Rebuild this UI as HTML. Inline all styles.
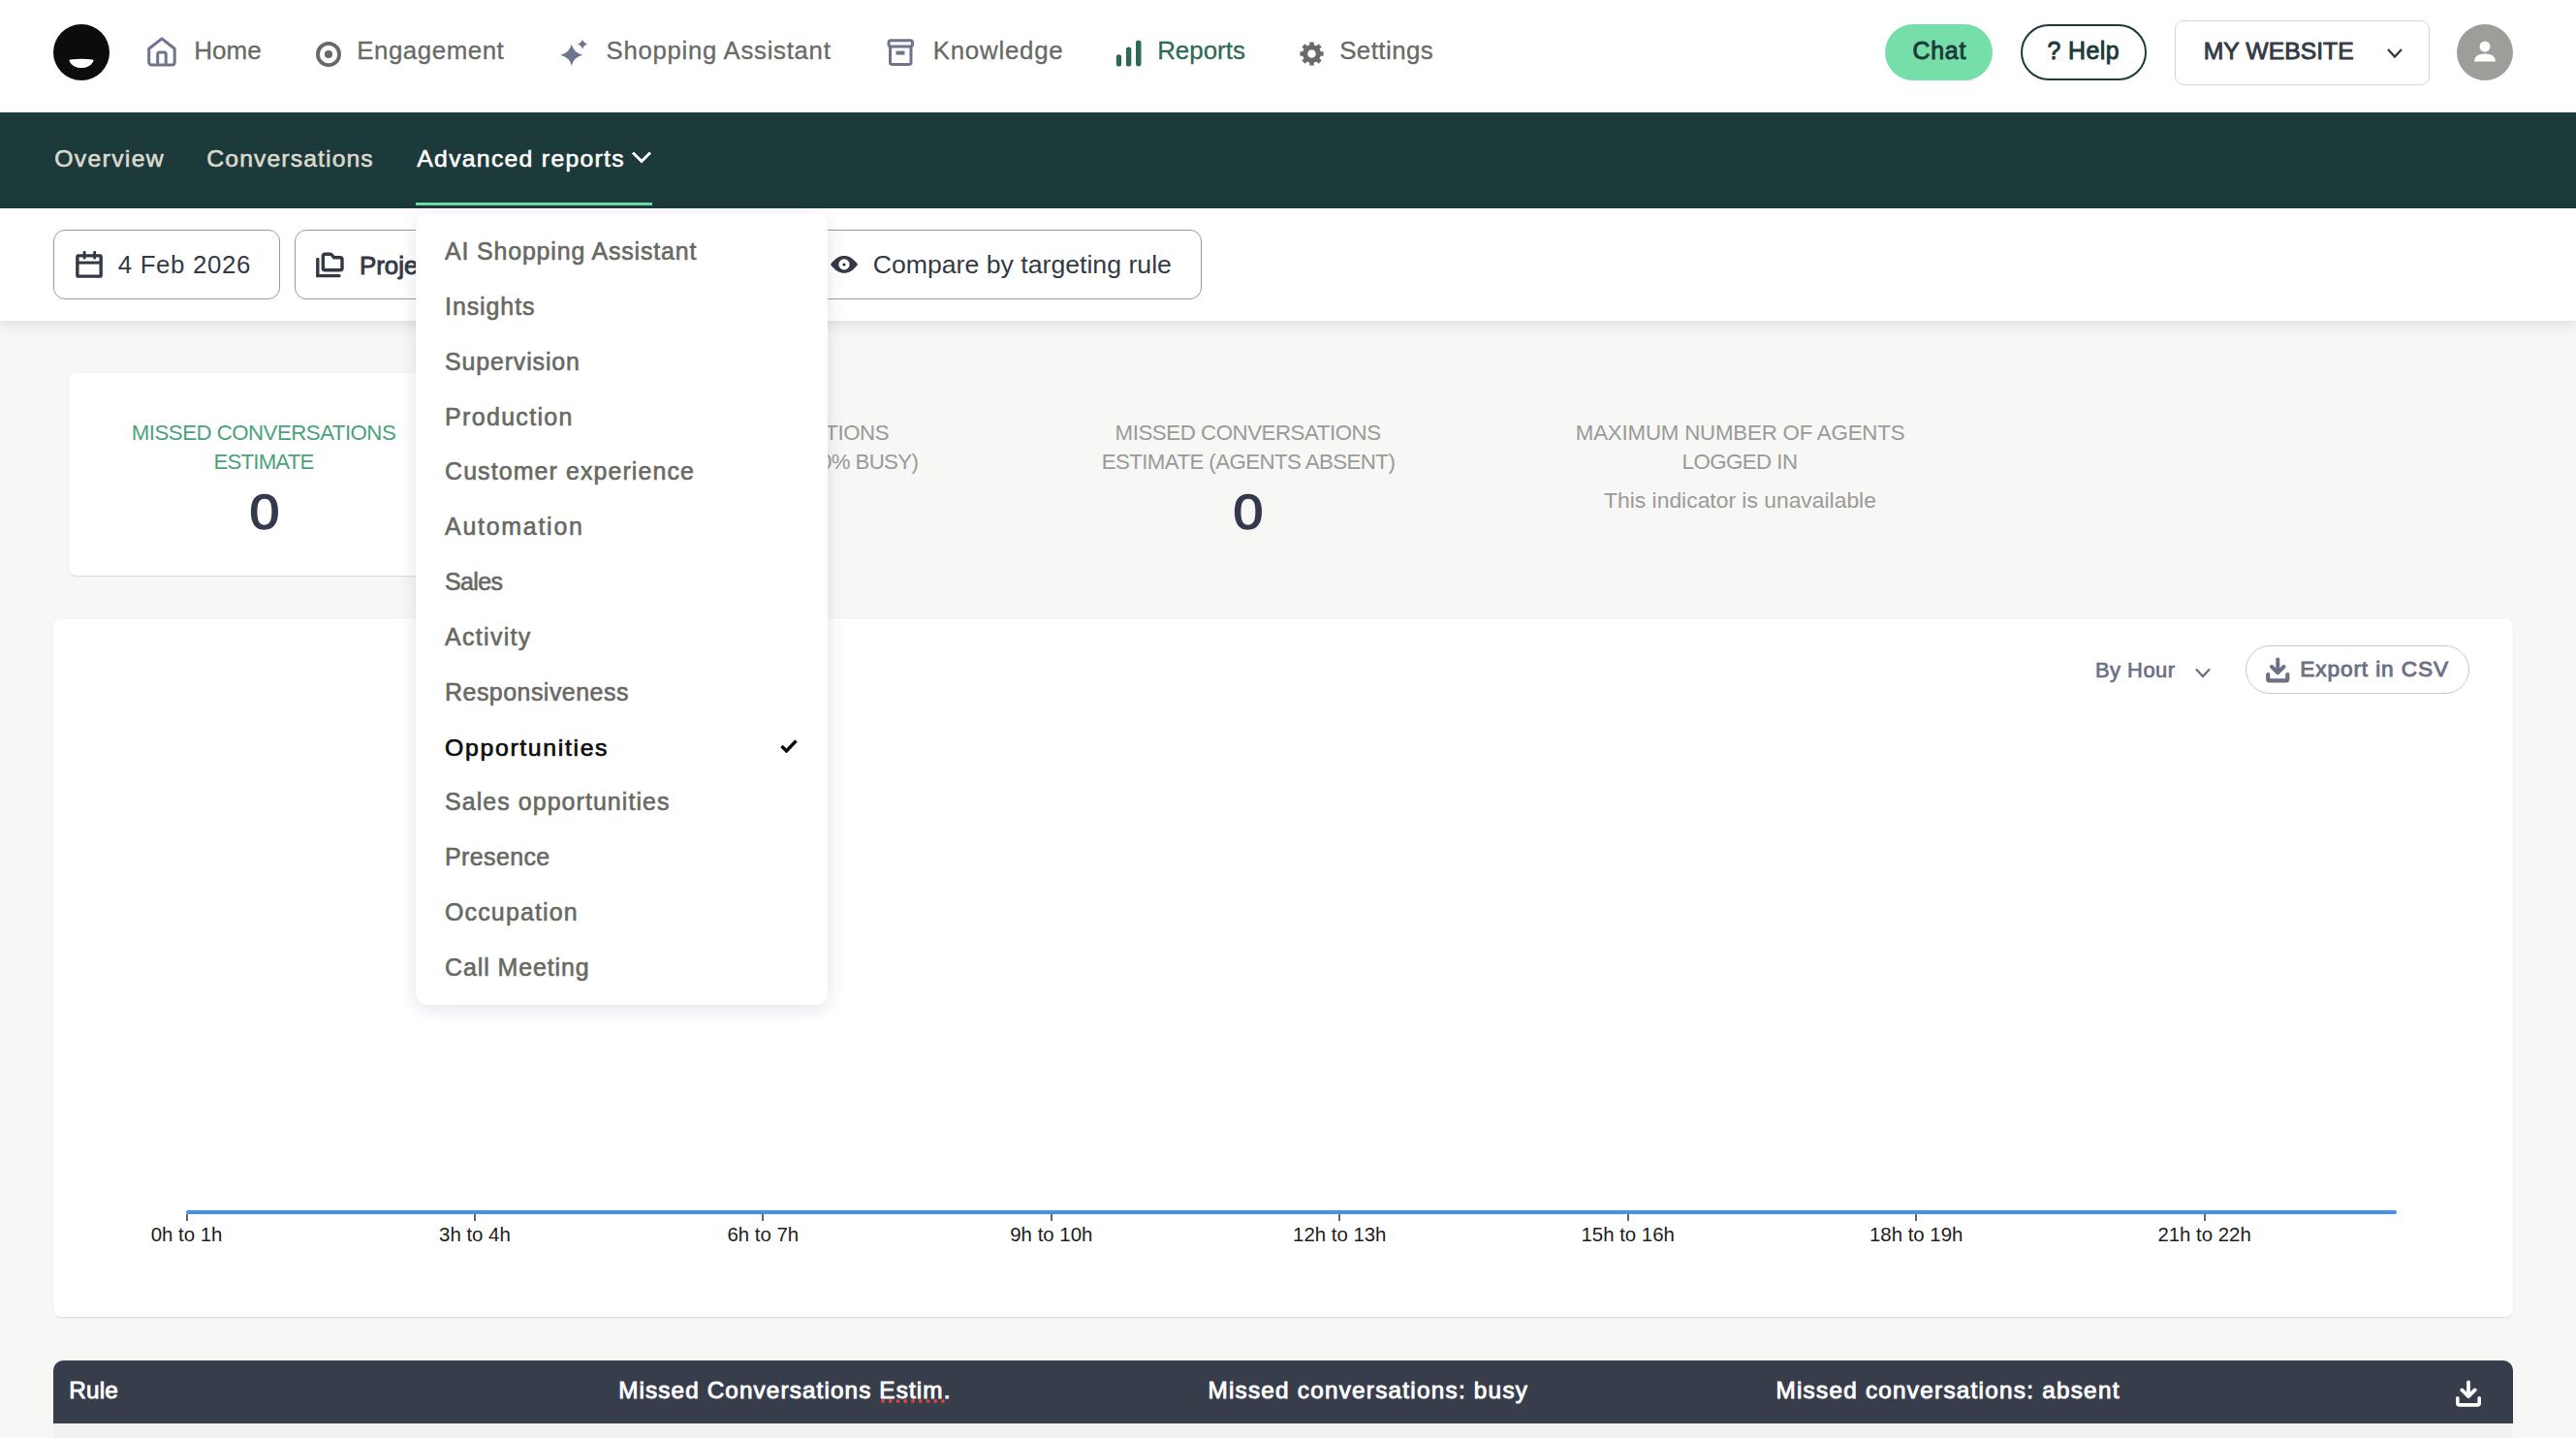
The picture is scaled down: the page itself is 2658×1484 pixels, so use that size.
<!DOCTYPE html>
<html><head><meta charset="utf-8"><style>
html,body{margin:0;padding:0}
body{width:2658px;height:1484px;overflow:hidden;position:relative;background:#f7f7f5;font-family:"Liberation Sans",sans-serif}
.t{position:absolute;white-space:nowrap;line-height:1}
.r{position:absolute;display:block}
.bm{display:inline-block;width:0;height:0;vertical-align:baseline}
</style></head><body>
<div class="r" style="left:0px;top:0px;width:2658px;height:116px;background:#fff"></div>
<div class="r" style="left:0px;top:116px;width:2658px;height:99px;background:#1c3a3a"></div>
<div class="r" style="left:0px;top:215px;width:2658px;height:116px;background:#fff;box-shadow:0 4px 12px rgba(50,60,110,0.13)"></div>
<div class="r" style="left:71px;top:385px;width:402px;height:209px;background:#fff;border-radius:8px;box-shadow:0 1px 1.5px rgba(0,0,0,0.12)"></div>
<div class="r" style="left:55px;top:639px;width:2538px;height:720px;background:#fff;border-radius:8px;box-shadow:0 1px 1.5px rgba(0,0,0,0.12)"></div>
<div class="r" style="left:55px;top:1404px;width:2538px;height:65px;background:#383d4c;border-radius:10px 10px 0 0"></div>
<div class="r" style="left:55px;top:1469px;width:2538px;height:15px;background:#f2f2f2"></div>
<svg class="r" style="left:55px;top:25px;" width="58" height="58" viewBox="0 0 58 58"><circle cx="29" cy="29" r="29" fill="#0b0c0b"/><path d="M16.5 37.7 Q16.2 36.8 17.6 36.6 Q29 35.1 40.4 36.6 Q41.8 36.8 41.5 37.7 C39.5 42.6 34.5 45.1 29 45.1 C23.5 45.1 18.5 42.6 16.5 37.7 Z" fill="#fff"/></svg>
<svg class="r" style="left:150px;top:36px;" width="34" height="34" viewBox="0 0 34 34"><path d="M3.7 14.3 L17 3.9 L30.2 14.3 V28 Q30.2 31.1 27.2 31.1 H6.7 Q3.7 31.1 3.7 28 Z" fill="none" stroke="#6e7490" stroke-width="3" stroke-linejoin="round"/><path d="M12.7 31.1 V19.9 Q12.7 17.9 14.7 17.9 H19.2 Q21.2 17.9 21.2 19.9 V31.1" fill="none" stroke="#6e7490" stroke-width="3"/></svg>
<div id="t0" class="t" style="left:200.15px;top:39.00px;font-size:26.02px;color:#686a65;font-weight:400;letter-spacing:0.078px;-webkit-text-stroke:0.3px #686a65;">Home<span class="bm"></span></div>
<svg class="r" style="left:324.5px;top:41.5px;" width="28" height="28" viewBox="0 0 28 28"><circle cx="14" cy="14" r="11.1" fill="none" stroke="#686a65" stroke-width="3.8"/><circle cx="14" cy="14" r="4.1" fill="#686a65"/></svg>
<div id="t1" class="t" style="left:368.15px;top:40.21px;font-size:25.87px;color:#686a65;font-weight:400;letter-spacing:0.556px;-webkit-text-stroke:0.3px #686a65;">Engagement<span class="bm"></span></div>
<svg class="r" style="left:576px;top:38px;" width="32" height="32" viewBox="0 0 32 32"><path d="M13.8 7.6 Q15.6 16.2 25 18.8 Q15.6 21.4 13.8 29.9 Q12 21.4 2.4 18.8 Q12 16.2 13.8 7.6 Z" fill="#6e7490"/><path d="M25 2.4 Q25.9 6.1 30.3 7.4 Q25.9 8.7 25 12.6 Q24.1 8.7 19.8 7.4 Q24.1 6.1 25 2.4 Z" fill="#6e7490"/></svg>
<div id="t2" class="t" style="left:625.55px;top:40.10px;font-size:25.73px;color:#686a65;font-weight:400;letter-spacing:0.735px;-webkit-text-stroke:0.3px #686a65;">Shopping Assistant<span class="bm"></span></div>
<svg class="r" style="left:914px;top:39px;" width="30" height="30" viewBox="0 0 30 30"><rect x="3" y="2.8" width="24.5" height="6.2" rx="2.2" fill="none" stroke="#6e7490" stroke-width="3"/><path d="M4.5 9 V25.6 Q4.5 27.4 6.3 27.4 H24.2 Q26 27.4 26 25.6 V9" fill="none" stroke="#6e7490" stroke-width="3"/><rect x="10.5" y="13.6" width="9" height="4" fill="#6e7490"/></svg>
<div id="t3" class="t" style="left:962.65px;top:40.21px;font-size:25.87px;color:#686a65;font-weight:400;letter-spacing:0.767px;-webkit-text-stroke:0.3px #686a65;">Knowledge<span class="bm"></span></div>
<svg class="r" style="left:1150px;top:40px;" width="30" height="30" viewBox="0 0 30 30"><rect x="1.8" y="16.2" width="5.3" height="12.4" rx="2.65" fill="#2d6a53"/><rect x="11.9" y="8.4" width="5.4" height="20.2" rx="2.7" fill="#2d6a53"/><rect x="22" y="1.6" width="5.5" height="27" rx="2.75" fill="#2d6a53"/></svg>
<div id="t4" class="t" style="left:1194.15px;top:40.21px;font-size:25.87px;color:#2d6a53;font-weight:400;letter-spacing:0.025px;-webkit-text-stroke:0.3px #2d6a53;">Reports<span class="bm"></span></div>
<svg class="r" style="left:1340px;top:41.7px;" width="27" height="27" viewBox="0 0 27 27"><path d="M22.00 11.24 L25.59 11.24 L25.59 15.76 L22.00 15.76 L21.11 17.91 L23.65 20.45 L20.45 23.65 L17.91 21.11 L15.76 22.00 L15.76 25.59 L11.24 25.59 L11.24 22.00 L9.09 21.11 L6.55 23.65 L3.35 20.45 L5.89 17.91 L5.00 15.76 L1.41 15.76 L1.41 11.24 L5.00 11.24 L5.89 9.09 L3.35 6.55 L6.55 3.35 L9.09 5.89 L11.24 5.00 L11.24 1.41 L15.76 1.41 L15.76 5.00 L17.91 5.89 L20.45 3.35 L23.65 6.55 L21.11 9.09 Z" fill="#686a65"/><circle cx="13.5" cy="13.5" r="9.4" fill="#686a65"/><circle cx="13.5" cy="13.5" r="4.25" fill="#fff"/></svg>
<div id="t5" class="t" style="left:1382.15px;top:40.21px;font-size:25.87px;color:#686a65;font-weight:400;letter-spacing:0.453px;-webkit-text-stroke:0.3px #686a65;">Settings<span class="bm"></span></div>
<div class="r" style="left:1945px;top:25px;width:111px;height:58px;background:#76dfa9;border-radius:29px"></div>
<div id="t6" class="t" style="left:1973.45px;top:41.00px;font-size:24.85px;color:#1c3a3a;font-weight:400;letter-spacing:0.802px;-webkit-text-stroke:0.9px #1c3a3a;">Chat<span class="bm"></span></div>
<div class="r" style="left:2085px;top:25px;width:130px;height:58px;box-sizing:border-box;border:2px solid #1c3a3a;border-radius:29px"></div>
<div id="t7" class="t" style="left:2112.45px;top:41.00px;font-size:24.85px;color:#1c3a3a;font-weight:400;letter-spacing:0.454px;-webkit-text-stroke:0.9px #1c3a3a;">? Help<span class="bm"></span></div>
<div class="r" style="left:2244px;top:21px;width:263px;height:67px;box-sizing:border-box;border:1.5px solid #d6d6d3;border-radius:9px"></div>
<div id="t8" class="t" style="left:2273.75px;top:40.91px;font-size:24.71px;color:#343a45;font-weight:400;letter-spacing:0.024px;-webkit-text-stroke:0.9px #343a45;">MY WEBSITE<span class="bm"></span></div>
<svg class="r" style="left:2462px;top:49px;" width="18" height="12" viewBox="0 0 18 12"><path d="M2 2 L9 9.5 L16 2" fill="none" stroke="#343a45" stroke-width="2.4"/></svg>
<svg class="r" style="left:2535px;top:25px;" width="58" height="58" viewBox="0 0 58 58"><circle cx="29" cy="29" r="29" fill="#9d9e9a"/><circle cx="29" cy="23" r="5.5" fill="#fff"/><path d="M18 38.5 Q18 30.5 29 30.5 Q40 30.5 40 38.5 Z" fill="#fff"/></svg>
<div id="t9" class="t" style="left:56.30px;top:152.00px;font-size:24.71px;color:#dcd9d0;font-weight:400;letter-spacing:1.337px;-webkit-text-stroke:0.6px #dcd9d0;">Overview<span class="bm"></span></div>
<div id="t10" class="t" style="left:213.30px;top:152.00px;font-size:24.71px;color:#dcd9d0;font-weight:400;letter-spacing:1.126px;-webkit-text-stroke:0.6px #dcd9d0;">Conversations<span class="bm"></span></div>
<div id="t11" class="t" style="left:430.30px;top:152.00px;font-size:24.71px;color:#ffffff;font-weight:400;letter-spacing:1.312px;-webkit-text-stroke:0.6px #ffffff;">Advanced reports<span class="bm"></span></div>
<svg class="r" style="left:650px;top:154px;" width="24" height="17" viewBox="0 0 24 16"><path d="M3 3 L12 12 L21 3" fill="none" stroke="#fff" stroke-width="3"/></svg>
<div class="r" style="left:429px;top:209px;width:244px;height:3px;background:#6fdca4"></div>
<div class="r" style="left:55px;top:237px;width:234px;height:72px;box-sizing:border-box;border:1.5px solid #9a9a9a;border-radius:12px"></div>
<svg class="r" style="left:77px;top:258px;" width="30" height="30" viewBox="0 0 30 30"><rect x="2.85" y="5.85" width="24.3" height="21.3" rx="1.2" fill="none" stroke="#343a45" stroke-width="3.4"/><rect x="2.85" y="11.6" width="24.3" height="3" fill="#343a45"/><rect x="8.7" y="1" width="2.9" height="8.5" rx="1.2" fill="#343a45"/><rect x="19.2" y="1" width="2.9" height="8.5" rx="1.2" fill="#343a45"/></svg>
<div id="t12" class="t" style="left:121.80px;top:260.82px;font-size:25.87px;color:#343a45;font-weight:400;letter-spacing:0.632px;">4 Feb 2026<span class="bm"></span></div>
<div class="r" style="left:304px;top:237px;width:600px;height:72px;box-sizing:border-box;border:1.5px solid #9a9a9a;border-radius:12px"></div>
<svg class="r" style="left:325px;top:258px;" width="32" height="32" viewBox="0 0 32 32"><path d="M8.3 6.3 Q8.3 4.2 10.4 4.2 H15.6 Q16.6 4.2 17.3 5 L19.6 7.8 H26 Q28 7.8 28 9.8 V18.7 Q28 20.8 26 20.8 H10.4 Q8.3 20.8 8.3 18.7 Z" fill="none" stroke="#343a45" stroke-width="3.4" stroke-linejoin="round"/><path d="M2.8 9.5 V26.6 H25" fill="none" stroke="#343a45" stroke-width="3.4" stroke-linecap="round"/></svg>
<div id="t13" class="t" style="left:370.95px;top:261.52px;font-size:25.87px;color:#343a45;font-weight:400;-webkit-text-stroke:0.9px #343a45;">Project<span class="bm"></span></div>
<div class="r" style="left:840px;top:237px;width:400px;height:72px;box-sizing:border-box;border:1.5px solid #9a9a9a;border-radius:12px;background:#fff"></div>
<svg class="r" style="left:856px;top:263px;" width="30" height="20" viewBox="0 0 30 20"><path d="M0.9 9.9 C6 3.4 10 1.1 15 1.1 C20 1.1 24 3.4 29.1 9.9 C24 16.4 20 18.7 15 18.7 C10 18.7 6 16.4 0.9 9.9 Z" fill="#343a45"/><circle cx="15" cy="9.9" r="5.6" fill="#fff"/><circle cx="15" cy="9.9" r="1.5" fill="#1d2028"/></svg>
<div id="t14" class="t" style="left:900.70px;top:260.30px;font-size:26.67px;color:#343a45;font-weight:400;">Compare by targeting rule<span class="bm"></span></div>
<div id="t15" class="t" style="left:-727.99px;width:2000px;text-align:center;top:435.76px;font-size:22.24px;color:#4aa27a;font-weight:400;letter-spacing:-0.502px;">MISSED CONVERSATIONS<span class="bm"></span></div>
<div id="t16" class="t" style="left:-728.02px;width:2000px;text-align:center;top:465.76px;font-size:22.24px;color:#4aa27a;font-weight:400;letter-spacing:-0.825px;">ESTIMATE<span class="bm"></span></div>
<div id="t17" class="t" style="left:-727.22px;width:2000px;text-align:center;top:504.25px;font-size:50.40px;color:#343a4b;font-weight:400;-webkit-text-stroke:1.5px #343a4b;transform:scaleX(1.1)">0<span class="bm"></span></div>
<div id="t18" class="t" style="left:-219.76px;width:2000px;text-align:center;top:435.76px;font-size:22.24px;color:#9a9a98;font-weight:400;letter-spacing:-0.444px;">MISSED CONVERSATIONS<span class="bm"></span></div>
<div id="t19" class="t" style="left:-220.32px;width:2000px;text-align:center;top:465.76px;font-size:22.24px;color:#9a9a98;font-weight:400;letter-spacing:-0.608px;">ESTIMATE (AGENTS 100% BUSY)<span class="bm"></span></div>
<div id="t20" class="t" style="left:-219.97px;width:2000px;text-align:center;top:504.25px;font-size:50.40px;color:#343a4b;font-weight:400;-webkit-text-stroke:1.5px #343a4b;transform:scaleX(1.1)">0<span class="bm"></span></div>
<div id="t21" class="t" style="left:287.60px;width:2000px;text-align:center;top:435.76px;font-size:22.24px;color:#9a9a98;font-weight:400;letter-spacing:-0.428px;">MISSED CONVERSATIONS<span class="bm"></span></div>
<div id="t22" class="t" style="left:287.94px;width:2000px;text-align:center;top:465.76px;font-size:22.24px;color:#9a9a98;font-weight:400;letter-spacing:-0.552px;">ESTIMATE (AGENTS ABSENT)<span class="bm"></span></div>
<div id="t23" class="t" style="left:287.93px;width:2000px;text-align:center;top:504.25px;font-size:50.40px;color:#343a4b;font-weight:400;-webkit-text-stroke:1.5px #343a4b;transform:scaleX(1.1)">0<span class="bm"></span></div>
<div id="t24" class="t" style="left:795.58px;width:2000px;text-align:center;top:435.76px;font-size:22.24px;color:#9a9a98;font-weight:400;letter-spacing:-0.164px;">MAXIMUM NUMBER OF AGENTS<span class="bm"></span></div>
<div id="t25" class="t" style="left:795.06px;width:2000px;text-align:center;top:465.76px;font-size:22.24px;color:#9a9a98;font-weight:400;letter-spacing:-0.517px;">LOGGED IN<span class="bm"></span></div>
<div id="t26" class="t" style="left:795.49px;width:2000px;text-align:center;top:505.01px;font-size:22.87px;color:#9a9a98;font-weight:400;">This indicator is unavailable<span class="bm"></span></div>
<div id="t27" class="t" style="left:2161.95px;top:680.80px;font-size:21.95px;color:#6b7085;font-weight:400;letter-spacing:0.478px;-webkit-text-stroke:0.7px #6b7085;">By Hour<span class="bm"></span></div>
<svg class="r" style="left:2264px;top:688px;" width="18" height="13" viewBox="0 0 18 13"><path d="M2 2.5 L9 10 L16 2.5" fill="none" stroke="#6b7085" stroke-width="2.4"/></svg>
<div class="r" style="left:2317px;top:666px;width:231px;height:50px;box-sizing:border-box;border:1.5px solid #c8cad3;border-radius:25px"></div>
<svg class="r" style="left:2336px;top:678px;" width="28" height="28" viewBox="0 0 28 28"><path d="M14.3 2.6 V14" stroke="#6b7085" stroke-width="4" stroke-linecap="round"/><path d="M8 10 L14.3 16.2 L20.6 10" fill="none" stroke="#6b7085" stroke-width="4" stroke-linecap="round" stroke-linejoin="round"/><path d="M4.2 18.2 V23 Q4.2 24.3 5.5 24.3 H23 Q24.3 24.3 24.3 23 V18.2" fill="none" stroke="#6b7085" stroke-width="4.2" stroke-linecap="round" stroke-linejoin="round"/></svg>
<div id="t28" class="t" style="left:2373.25px;top:679.00px;font-size:22.67px;color:#6b7085;font-weight:400;letter-spacing:0.875px;-webkit-text-stroke:0.9px #6b7085;">Export in CSV<span class="bm"></span></div>
<div class="r" style="left:192px;top:1249px;width:2281px;height:4px;background:#4592ee;border-radius:2px"></div>
<div class="r" style="left:192px;top:1253px;width:2px;height:7px;background:#666"></div>
<div id="t29" class="t" style="left:-807.51px;width:2000px;text-align:center;top:1263.60px;font-size:20.40px;color:#1d1d1d;font-weight:400;">0h to 1h<span class="bm"></span></div>
<div class="r" style="left:489px;top:1253px;width:2px;height:7px;background:#666"></div>
<div id="t30" class="t" style="left:-510.07px;width:2000px;text-align:center;top:1263.60px;font-size:20.40px;color:#1d1d1d;font-weight:400;">3h to 4h<span class="bm"></span></div>
<div class="r" style="left:786px;top:1253px;width:2px;height:7px;background:#666"></div>
<div id="t31" class="t" style="left:-212.63px;width:2000px;text-align:center;top:1263.60px;font-size:20.40px;color:#1d1d1d;font-weight:400;">6h to 7h<span class="bm"></span></div>
<div class="r" style="left:1084px;top:1253px;width:2px;height:7px;background:#666"></div>
<div id="t32" class="t" style="left:84.82px;width:2000px;text-align:center;top:1263.60px;font-size:20.40px;color:#1d1d1d;font-weight:400;">9h to 10h<span class="bm"></span></div>
<div class="r" style="left:1381px;top:1253px;width:2px;height:7px;background:#666"></div>
<div id="t33" class="t" style="left:382.28px;width:2000px;text-align:center;top:1263.60px;font-size:20.40px;color:#1d1d1d;font-weight:400;">12h to 13h<span class="bm"></span></div>
<div class="r" style="left:1679px;top:1253px;width:2px;height:7px;background:#666"></div>
<div id="t34" class="t" style="left:679.72px;width:2000px;text-align:center;top:1263.60px;font-size:20.40px;color:#1d1d1d;font-weight:400;">15h to 16h<span class="bm"></span></div>
<div class="r" style="left:1976px;top:1253px;width:2px;height:7px;background:#666"></div>
<div id="t35" class="t" style="left:977.16px;width:2000px;text-align:center;top:1263.60px;font-size:20.40px;color:#1d1d1d;font-weight:400;">18h to 19h<span class="bm"></span></div>
<div class="r" style="left:2274px;top:1253px;width:2px;height:7px;background:#666"></div>
<div id="t36" class="t" style="left:1274.60px;width:2000px;text-align:center;top:1263.60px;font-size:20.40px;color:#1d1d1d;font-weight:400;">21h to 22h<span class="bm"></span></div>
<div id="t37" class="t" style="left:71.15px;top:1422.80px;font-size:24.27px;color:#fff;font-weight:400;letter-spacing:0.273px;-webkit-text-stroke:0.9px #fff;">Rule<span class="bm"></span></div>
<div id="t38" class="t" style="left:638.15px;top:1422.80px;font-size:24.27px;color:#fff;font-weight:400;letter-spacing:1.131px;-webkit-text-stroke:0.9px #fff;">Missed Conversations Estim.<span class="bm"></span></div>
<div id="t39" class="t" style="left:1246.45px;top:1422.80px;font-size:24.27px;color:#fff;font-weight:400;letter-spacing:1.256px;-webkit-text-stroke:0.9px #fff;">Missed conversations: busy<span class="bm"></span></div>
<div id="t40" class="t" style="left:1832.45px;top:1422.80px;font-size:24.27px;color:#fff;font-weight:400;letter-spacing:1.270px;-webkit-text-stroke:0.9px #fff;">Missed conversations: absent<span class="bm"></span></div>
<svg class="r" style="left:2533px;top:1423px;" width="28" height="29" viewBox="0 0 28 29"><path d="M14 3.5 V16.5" stroke="#fff" stroke-width="3.8" stroke-linecap="round"/><path d="M7.3 11.4 L14 18.1 L20.7 11.4" fill="none" stroke="#fff" stroke-width="3.8" stroke-linecap="round" stroke-linejoin="round"/><path d="M2.8 19.8 V24.9 Q2.8 26.9 4.8 26.9 H23.2 Q25.2 26.9 25.2 24.9 V19.8" fill="none" stroke="#fff" stroke-width="3.6" stroke-linecap="round" stroke-linejoin="round"/></svg>
<svg class="r" style="left:905px;top:1441px" width="76" height="10" viewBox="0 0 76 10"><circle cx="6.00" cy="5" r="1.9" fill="#d9493a"/><circle cx="13.74" cy="5" r="1.9" fill="#d9493a"/><circle cx="21.48" cy="5" r="1.9" fill="#d9493a"/><circle cx="29.22" cy="5" r="1.9" fill="#d9493a"/><circle cx="36.96" cy="5" r="1.9" fill="#d9493a"/><circle cx="44.70" cy="5" r="1.9" fill="#d9493a"/><circle cx="52.44" cy="5" r="1.9" fill="#d9493a"/><circle cx="60.18" cy="5" r="1.9" fill="#d9493a"/><circle cx="67.92" cy="5" r="1.9" fill="#d9493a"/></svg>
<div class="r" style="left:429px;top:220px;width:425px;height:817px;background:#fff;border-radius:12px;box-shadow:0 4px 18px rgba(50,60,110,0.14)"></div>
<div id="t41" class="t" style="left:459.05px;top:247.11px;font-size:24.93px;color:#676963;font-weight:400;letter-spacing:0.843px;-webkit-text-stroke:0.6px #676963;">AI Shopping Assistant<span class="bm"></span></div>
<div id="t42" class="t" style="left:459.05px;top:303.94px;font-size:24.93px;color:#676963;font-weight:400;letter-spacing:0.932px;-webkit-text-stroke:0.6px #676963;">Insights<span class="bm"></span></div>
<div id="t43" class="t" style="left:459.05px;top:360.77px;font-size:24.93px;color:#676963;font-weight:400;letter-spacing:0.865px;-webkit-text-stroke:0.6px #676963;">Supervision<span class="bm"></span></div>
<div id="t44" class="t" style="left:459.05px;top:417.61px;font-size:24.93px;color:#676963;font-weight:400;letter-spacing:1.361px;-webkit-text-stroke:0.6px #676963;">Production<span class="bm"></span></div>
<div id="t45" class="t" style="left:459.05px;top:474.44px;font-size:24.93px;color:#676963;font-weight:400;letter-spacing:1.109px;-webkit-text-stroke:0.6px #676963;">Customer experience<span class="bm"></span></div>
<div id="t46" class="t" style="left:459.05px;top:531.27px;font-size:24.93px;color:#676963;font-weight:400;letter-spacing:1.752px;-webkit-text-stroke:0.6px #676963;">Automation<span class="bm"></span></div>
<div id="t47" class="t" style="left:459.05px;top:588.09px;font-size:24.93px;color:#676963;font-weight:400;letter-spacing:-0.605px;-webkit-text-stroke:0.6px #676963;">Sales<span class="bm"></span></div>
<div id="t48" class="t" style="left:459.05px;top:644.92px;font-size:24.93px;color:#676963;font-weight:400;letter-spacing:1.322px;-webkit-text-stroke:0.6px #676963;">Activity<span class="bm"></span></div>
<div id="t49" class="t" style="left:459.05px;top:701.75px;font-size:24.93px;color:#676963;font-weight:400;letter-spacing:0.495px;-webkit-text-stroke:0.6px #676963;">Responsiveness<span class="bm"></span></div>
<div id="t50" class="t" style="left:459.10px;top:759.58px;font-size:24.78px;color:#0d0d0d;font-weight:400;letter-spacing:1.675px;-webkit-text-stroke:0.7px #0d0d0d;">Opportunities<span class="bm"></span></div>
<div id="t51" class="t" style="left:459.05px;top:815.41px;font-size:24.93px;color:#676963;font-weight:400;letter-spacing:1.077px;-webkit-text-stroke:0.6px #676963;">Sales opportunities<span class="bm"></span></div>
<div id="t52" class="t" style="left:459.05px;top:872.24px;font-size:24.93px;color:#676963;font-weight:400;letter-spacing:0.405px;-webkit-text-stroke:0.6px #676963;">Presence<span class="bm"></span></div>
<div id="t53" class="t" style="left:459.05px;top:929.08px;font-size:24.93px;color:#676963;font-weight:400;letter-spacing:1.169px;-webkit-text-stroke:0.6px #676963;">Occupation<span class="bm"></span></div>
<div id="t54" class="t" style="left:459.05px;top:985.91px;font-size:24.93px;color:#676963;font-weight:400;letter-spacing:0.914px;-webkit-text-stroke:0.6px #676963;">Call Meeting<span class="bm"></span></div>
<svg class="r" style="left:805px;top:763px;" width="18" height="14" viewBox="0 0 18 14"><path d="M1.5 7 L6.5 12 L16.5 1.5" fill="none" stroke="#0d0d0d" stroke-width="3.4"/></svg>
</body></html>
